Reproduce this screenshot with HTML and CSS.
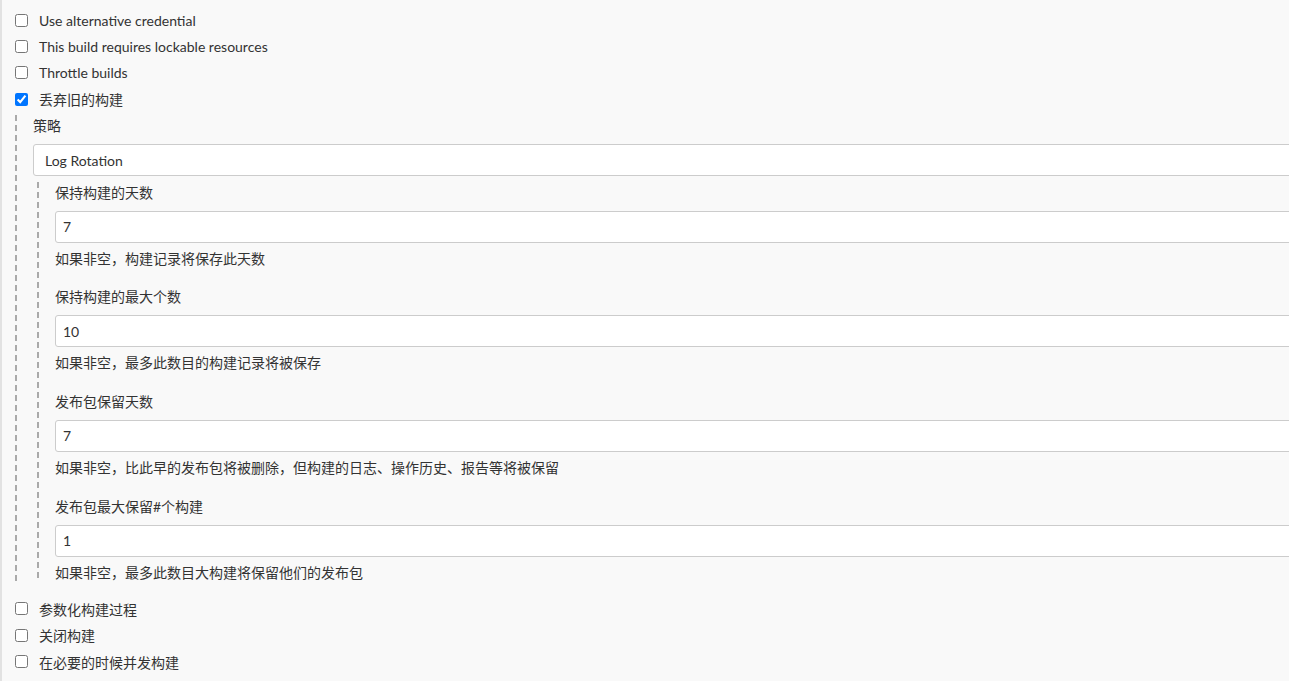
FILE: index.html
```html
<!DOCTYPE html>
<html lang="zh-CN">
<head>
  <meta charset="UTF-8" />
  <title>配置</title>
  <link rel="stylesheet" href="styles.css">
</head>
<body>
  <div class="page">
    <label class="option"><input type="checkbox" /> Use alternative credential</label>
    <label class="option"><input type="checkbox" /> This build requires lockable resources</label>
    <label class="option"><input type="checkbox" /> Throttle builds</label>
    <label class="option"><input type="checkbox" checked /> 丢弃旧的构建</label>

    <div class="nested">
      <div class="field-label">策略</div>
      <select class="control">
        <option>Log Rotation</option>
      </select>

      <div class="nested inner">
        <div class="field">
          <div class="field-label">保持构建的天数</div>
          <input class="control" type="text" value="7" />
          <div class="help">如果非空，构建记录将保存此天数</div>
        </div>
        <div class="field">
          <div class="field-label">保持构建的最大个数</div>
          <input class="control" type="text" value="10" />
          <div class="help">如果非空，最多此数目的构建记录将被保存</div>
        </div>
        <div class="field">
          <div class="field-label">发布包保留天数</div>
          <input class="control" type="text" value="7" />
          <div class="help">如果非空，比此早的发布包将被删除，但构建的日志、操作历史、报告等将被保留</div>
        </div>
        <div class="field">
          <div class="field-label">发布包最大保留#个构建</div>
          <input class="control" type="text" value="1" />
          <div class="help">如果非空，最多此数目大构建将保留他们的发布包</div>
        </div>
      </div>
    </div>

    <div class="after">
      <label class="option"><input type="checkbox" /> 参数化构建过程</label>
      <label class="option"><input type="checkbox" /> 关闭构建</label>
      <label class="option"><input type="checkbox" /> 在必要的时候并发构建</label>
    </div>
  </div>
</body>
</html>
```

FILE: styles.css
```css
html, body {
  overflow: hidden;
}
body {
  margin: 0;
  background: #f9f9f9;
  color: #333;
  font-family: Lato, 'Noto Sans CJK SC', sans-serif;
  font-size: 14px;
  border-left: 2px solid #e2e2e2;
  min-height: 100vh;
}
.page {
  width: 1380px;
  padding: 7px 0 0 13px;
}
.option {
  display: flex;
  align-items: center;
  gap: 11px;
  height: 26.4px;
}
.option input {
  margin: 0;
  width: 13px;
  height: 13px;
}
/* dashed guide on the left of nested blocks */
.nested {
  margin-top: 1px;
  padding: 3px 0 0 18px;
  background: linear-gradient(#aaa 6px, transparent 6px) 0 1px / 2px 10px repeat-y;
}
.nested.inner {
  margin: 5px 0 0 4px;
}
.field-label {
  line-height: 18px;
  margin-bottom: 9px;
}
.control {
  display: block;
  box-sizing: border-box;
  width: 100%;
  height: 32px;
  margin: 0;
  border: 1px solid #ccc;
  border-radius: 3px;
  background: #fff;
  color: #333;
  font: inherit;
  padding: 0 7px;
  outline: none;
}
select.control {
  appearance: none;
  padding: 2px 11px 0;
}
.help {
  line-height: 18px;
  margin-top: 7px;
}
.field + .field {
  margin-top: 20.7px;
}
.after {
  margin-top: 14px;
}
```
